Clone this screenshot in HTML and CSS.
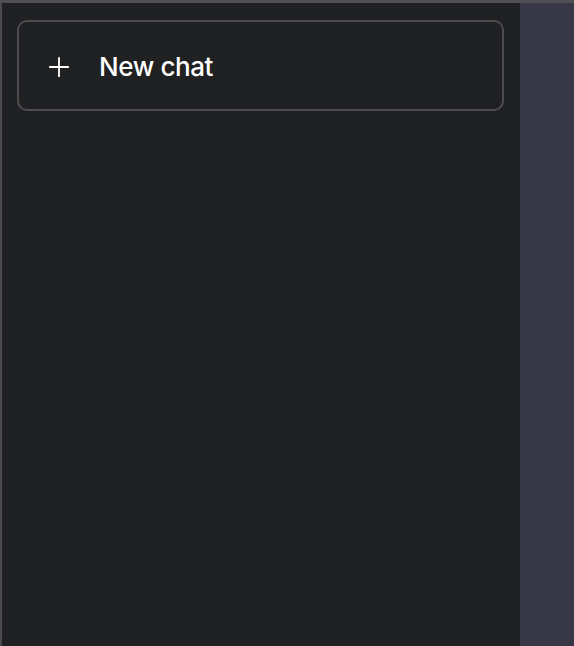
FILE: index.html
```html
<!DOCTYPE html>
<html>
<head>
<meta charset="utf-8">
<link rel="stylesheet" href="styles.css">
</head>
<body>
<div class="app">
  <aside class="sidebar">
    <button class="new-chat">
      <svg class="plus" width="24" height="24" viewBox="0 0 24 24" fill="none" stroke="#fff" stroke-width="2" stroke-linecap="round"><path d="M12 2v20M2 12h20"/></svg>
      <span class="label">New chat</span>
    </button>
  </aside>
  <main class="main"></main>
</div>
</body>
</html>
```
FILE: styles.css
```css
html, body {
  margin: 0;
  padding: 0;
  height: 100%;
  background: #202123;
}
.app {
  display: flex;
  height: 646px;
  border-top: 3px solid #505054;
  box-sizing: border-box;
}
.sidebar {
  flex: none;
  width: 520px;
  box-sizing: border-box;
  background: #202123;
  border-left: 2px solid #4a4a4e;
  padding: 17px 16px 0 15px;
}
.main {
  flex: 1;
  background: #383745;
}
.new-chat {
  display: flex;
  align-items: center;
  width: 100%;
  height: 91px;
  box-sizing: border-box;
  background: transparent;
  border: 2px solid #4d4d4f;
  border-radius: 10px;
  padding: 2px 0 0 29px;
  color: #fff;
  font-family: Inter, "Helvetica Neue", sans-serif;
  font-size: 26px;
  font-weight: 500;
  cursor: pointer;
}
.plus {
  width: 22px;
  height: 22px;
  flex: none;
}
.label {
  margin-left: 29px;
  letter-spacing: -0.4px;
}
```
